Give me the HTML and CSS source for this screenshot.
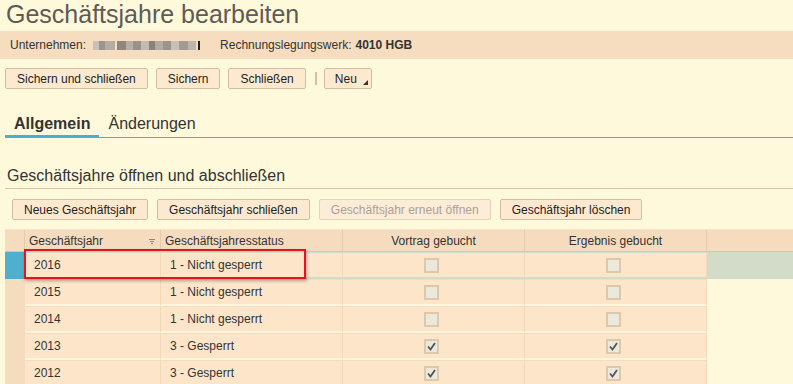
FILE: index.html
```html
<!DOCTYPE html>
<html lang="de">
  <head>
    <meta charset="UTF-8" />
    <meta name="viewport" content="width=device-width, initial-scale=1.0" />
    <title>Geschäftsjahre bearbeiten</title>
    <link rel="stylesheet" href="styles.css">
  </head>
  <body>
    <h1 class="page-title">Geschäftsjahre bearbeiten</h1>

    <div class="info-bar">
      <span>Unternehmen:</span>
      <span class="blurred"></span>
      <span class="info-label">Rechnungslegungswerk:</span>
      <b>4010 HGB</b>
    </div>

    <div class="toolbar">
      <button>Sichern und schließen</button>
      <button>Sichern</button>
      <button>Schließen</button>
      <span class="toolbar-sep"></span>
      <button class="menu-btn">
        Neu
        <svg width="5" height="5" viewBox="0 0 5 5"><path d="M5 0 L5 5 L0 5 Z" fill="#333" /></svg>
      </button>
    </div>

    <div class="tabs">
      <span class="tab active">Allgemein</span>
      <span class="tab">Änderungen</span>
    </div>

    <h2 class="section-title">Geschäftsjahre öffnen und abschließen</h2>

    <div class="section-actions">
      <button>Neues Geschäftsjahr</button>
      <button>Geschäftsjahr schließen</button>
      <button disabled>Geschäftsjahr erneut öffnen</button>
      <button>Geschäftsjahr löschen</button>
    </div>

    <div class="grid-wrap">
      <table class="grid">
        <colgroup>
          <col class="c-gutter" />
          <col class="c-year" />
          <col class="c-wide" />
          <col class="c-wide" />
          <col class="c-wide" />
          <col />
        </colgroup>
        <thead>
          <tr>
            <th class="gutter"></th>
            <th>
              Geschäftsjahr
              <svg class="filter-icon" width="6" height="5" viewBox="0 0 6 5">
                <path d="M0 0.5 H6 M1 2.5 H5 M2 4.5 H4" stroke="#888" stroke-width="1" />
              </svg>
            </th>
            <th>Geschäftsjahresstatus</th>
            <th class="center">Vortrag gebucht</th>
            <th class="center">Ergebnis gebucht</th>
            <th class="filler"></th>
          </tr>
        </thead>
        <tbody id="yearRows"></tbody>
      </table>
      <div class="highlight"></div>
    </div>

    <script>
      const years = [
        { year: 2016, status: "1 - Nicht gesperrt", carried: false, result: false },
        { year: 2015, status: "1 - Nicht gesperrt", carried: false, result: false },
        { year: 2014, status: "1 - Nicht gesperrt", carried: false, result: false },
        { year: 2013, status: "3 - Gesperrt", carried: true, result: true },
        { year: 2012, status: "3 - Gesperrt", carried: true, result: true },
      ];

      const checkMark =
        '<svg width="11" height="11" viewBox="0 0 11 11"><path d="M2 5.5 L4.5 8.5 L9 2" fill="none" stroke="#555" stroke-width="1.8" /></svg>';

      function checkbox(checked) {
        return `<span class="checkbox">${checked ? checkMark : ""}</span>`;
      }

      const tbody = document.getElementById("yearRows");
      years.forEach((y, i) => {
        const row = document.createElement("tr");
        if (i === 0) row.className = "selected";
        row.innerHTML = `
          <td class="gutter"></td>
          <td>${y.year}</td>
          <td>${y.status}</td>
          <td class="center">${checkbox(y.carried)}</td>
          <td class="center">${checkbox(y.result)}</td>
          <td class="filler"></td>`;
        tbody.appendChild(row);
      });
    </script>
  </body>
</html>
```

FILE: styles.css
```css
body {
  margin: 0;
  font-family: "Liberation Sans", Arial, sans-serif;
  font-size: 12px;
  color: #333;
  background-color: #fff9dc;
}

.page-title {
  margin: 0 0 2px 6px;
  font-size: 25px;
  line-height: 29px;
  font-weight: normal;
  color: #605a55;
}

.info-bar {
  display: flex;
  align-items: center;
  height: 28px;
  padding-left: 10px;
  background-color: #f6ddbf;
}

.blurred {
  display: inline-block;
  width: 107px;
  height: 9px;
  margin-left: 7px;
  background: linear-gradient(
    to right,
    #c9c1b9 0 6px,
    #9d958f 6px 12px,
    #b5aca4 12px 22px,
    #f6ddbf 22px 24px,
    #8f8680 24px 33px,
    #b7aea6 33px 40px,
    #9a918a 40px 48px,
    #c3bab2 48px 56px,
    #8a827c 56px 62px,
    #b3aaa2 62px 70px,
    #9c948e 70px 78px,
    #c8bfb7 78px 86px,
    #a29a93 86px 95px,
    #bdb4ac 95px 103px,
    #f6ddbf 103px 105px,
    #222 105px 107px
  );
}

.info-label {
  margin-left: 20px;
  margin-right: 4px;
}

button {
  height: 21px;
  padding: 0 11px;
  font-family: "Liberation Sans", Arial, sans-serif;
  font-size: 12px;
  color: #222;
  background-color: #fde9cf;
  border: 1px solid #d3bda0;
  border-radius: 2px;
}

button:disabled {
  color: #aba196;
  background-color: #fdecd6;
  border-color: #e6d3bb;
}

.toolbar {
  display: flex;
  align-items: center;
  margin: 9px 0 0 5px;
}

.toolbar button,
.section-actions button {
  margin-right: 8px;
}

.toolbar-sep {
  width: 2px;
  height: 13px;
  margin: 0 7px 0 1px;
  background-color: #d6bfa0;
}

.menu-btn {
  display: flex;
  align-items: center;
  gap: 6px;
  padding: 0 3px 0 10px;
}

.menu-btn svg {
  align-self: flex-end;
  margin-bottom: 3px;
}

.tabs {
  display: flex;
  margin: 26px 0 0 5px;
  border-bottom: 1px solid #4aaed5;
}

.tab {
  padding: 0 9px 2px;
  margin-bottom: -1px;
  font-size: 16px;
  line-height: 18px;
  color: #333;
  border-bottom: 3px solid transparent;
}

.tab.active {
  font-weight: bold;
  border-bottom-color: #4aaed5;
}

.section-title {
  margin: 28px 0 0 5px;
  padding: 0 0 2px 2px;
  font-size: 16px;
  line-height: 20px;
  font-weight: normal;
  color: #333;
  border-bottom: 1px solid #dcc6aa;
}

.section-actions {
  display: flex;
  margin: 10px 0 0 12px;
}

.section-actions button {
  margin-right: 9px;
}

.grid-wrap {
  position: relative;
  margin: 9px 0 0 5px;
}

.grid {
  width: 100%;
  table-layout: fixed;
  border-collapse: separate;
  border-spacing: 0;
}

.c-gutter {
  width: 20px;
}

.c-year {
  width: 136px;
}

.c-wide {
  width: 182px;
}

.grid th {
  box-sizing: border-box;
  height: 23px;
  padding: 0 4px;
  font-weight: normal;
  text-align: left;
  white-space: nowrap;
  background-color: #f5dcbf;
  border-top: 1px solid #f8e4cc;
  border-right: 1px solid #e5cba9;
  border-bottom: 1px solid #e1c5a2;
}

.grid th.filler {
  border-right: none;
}

.grid .center {
  text-align: center;
}

.filter-icon {
  float: right;
  margin: 5px 1px 0 0;
}

.grid td {
  box-sizing: border-box;
  height: 27px;
  padding: 0 0 0 9px;
  background-color: #fde5c9;
  border-top: 1px solid #f3dcbf;
  border-bottom: 2px solid #fff6dd;
  border-right: 1px solid #f2d8b8;
}

.grid td.center {
  padding: 0 5px 0 0;
}

.grid td.gutter {
  padding: 0;
  background-color: #f5dcbf;
  border-color: #f5dcbf;
}

.grid td.filler {
  background-color: transparent;
  border-color: transparent;
}

.grid tr.selected td {
  border-top-color: #d3dbc9;
  border-bottom-color: #d3dbc9;
}

.grid tr.selected td.gutter {
  background-color: #4fafcd;
  border-color: #4fafcd;
}

.grid tr.selected td.filler {
  background-color: #d3dbc9;
  border-color: #d3dbc9;
}

.checkbox {
  display: inline-block;
  width: 11px;
  height: 11px;
  vertical-align: middle;
  background-color: #ece8da;
  border: 2px solid #dcc9ad;
}

.checkbox svg {
  display: block;
}

.highlight {
  position: absolute;
  left: 19px;
  top: 20px;
  width: 278px;
  height: 26px;
  border: 2px solid #e5131d;
  box-shadow: 1px 2px 3px rgba(0, 0, 0, 0.3);
}
```
